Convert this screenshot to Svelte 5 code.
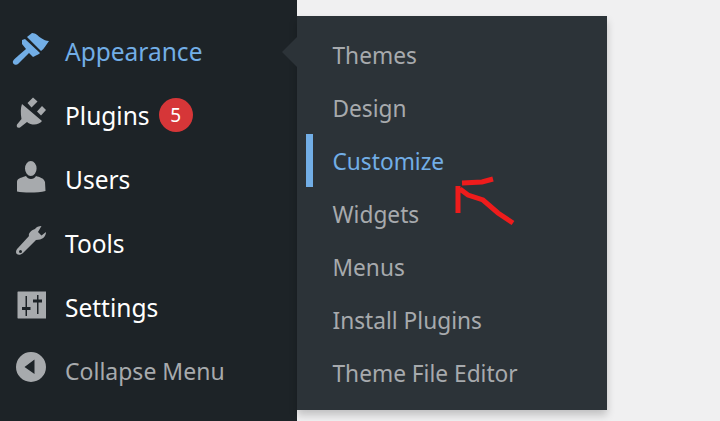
<script>
	const menu = [
		{
			label: 'Appearance',
			active: true,
			box: '0 3 48 40',
			d: 'M19 9L24 5C28 5 30 8 33 10C36 12 38 13 41 13C38 17 36 21 33 23ZM14 12L17 11L32 25L31 26L25 29L21 25L15 31L10 36C8 38 4 36 5 33C6 31 9 29 11 27L18 21L14 16Z'
		},
		{
			label: 'Plugins',
			badge: 5,
			box: '0 3 48 40',
			d: 'M14 12L34 29C31 33 24 34 19 30L12 35.5C10 36.5 8 35 9 32.5L13.5 27C12.5 21 12.5 16 14 12ZM19.5 11L25 5.5L29.5 9.5L23.5 15.5ZM29 19.5L34 14L38 18L33 23.5Z'
		},
		{
			label: 'Users',
			box: '0 3 48 40',
			d: 'M17 12.5a5.8 7.5 0 1 0 11.6 0a5.8 7.5 0 1 0 -11.6 0ZM9 26C9 23 12 22 15 21L18 20C20 24 26 24 28 20C31 21 36 22 37 26L37.5 35C30 37 16 37 9 35.5Z'
		},
		{
			label: 'Tools',
			box: '0 1 48 40',
			d: 'M27 7C28 5 31 4 33.5 4L30 10L33.5 13.5L38 10C38 15 34 18 28 18L15 31C12 34 8 33 8 30C8 28 9 27 10 26L21 14C20 11 24 8 27 7ZM11 29.5a1.5 1.5 0 1 0 3 0a1.5 1.5 0 1 0 -3 0Z'
		},
		{
			label: 'Settings',
			box: '0 1 48 40',
			d: 'M10 5.5H38V32.5H10A1 1 0 0 1 9.5 32V6A1 1 0 0 1 10 5.5ZM17.5 10V21H14V24H17.5V30H19V24H22.5V21H19V10ZM29 9V13.5H25V16.5H29V28H30.5V16.5H34V13.5H30.5V9Z'
		},
		{
			label: 'Collapse Menu',
			muted: true,
			box: '0 3 48 40',
			d: 'M8 19a15 15 0 1 0 30 0a15 15 0 1 0 -30 0ZM16.5 19L26.5 11.5V26Z'
		}
	];

	const submenu = ['Themes', 'Design', 'Customize', 'Widgets', 'Menus', 'Install Plugins', 'Theme File Editor'];
	const current = 'Customize';
</script>

<div class="page">
	<nav class="sidebar">
		{#each menu as item}
			<div class="item" class:active={item.active} class:muted={item.muted}>
				<svg class="icon" viewBox={item.box} width="48" height="40" aria-hidden="true">
					<path d={item.d} fill-rule="evenodd" />
				</svg>
				<span>{item.label}</span>
				{#if item.badge}
					<span class="badge">{item.badge}</span>
				{/if}
			</div>
		{/each}
	</nav>

	<ul class="flyout">
		{#each submenu as name}
			<li class:current={name === current}>{name}</li>
		{/each}
	</ul>

	<!-- hand drawn annotation on top of the screenshot -->
	<svg class="scribble" viewBox="0 0 720 421" aria-hidden="true">
		<path d="M458 213V186M462 183L482 182L493 179M460 189L468 195L483 200L498 213L513 223" />
	</svg>
</div>

<style>
	:global(body) {
		margin: 0;
	}

	.page {
		position: relative;
		display: flex;
		align-items: flex-start;
		height: 421px;
		overflow: hidden;
		background: #f0f0f1;
		font-family: 'Noto Sans', 'Open Sans', sans-serif;
	}

	.sidebar {
		flex: none;
		box-sizing: border-box;
		width: 297px;
		height: 421px;
		padding-top: 19px;
		background: #1d2327;
		color: #fff;
		font-size: 24.5px;
	}

	.item {
		display: flex;
		align-items: center;
		height: 64px;
		padding-left: 8px;
	}

	.item.active {
		color: #72aee6;
	}

	.item.muted {
		color: #a7aaad;
		font-size: 23px;
	}

	.icon {
		flex: none;
		margin-right: 9px;
		fill: #a7aaad;
	}

	.item.active .icon {
		fill: #72aee6;
	}

	.badge {
		display: flex;
		align-items: center;
		justify-content: center;
		width: 34px;
		height: 34px;
		margin-left: 9px;
		border-radius: 50%;
		background: #d63638;
		color: #fff;
		font-size: 19px;
	}

	.flyout {
		position: relative;
		flex: none;
		box-sizing: border-box;
		width: 310px;
		height: 394px;
		margin: 16px 0 0;
		padding: 12px 0 0;
		list-style: none;
		background: #2c3338;
		box-shadow: 0 5px 8px rgba(0, 0, 0, 0.2);
		color: #a7aaad;
		font-size: 22.7px;
	}

	/* pointer towards the active menu item */
	.flyout::before {
		content: '';
		position: absolute;
		top: 21px;
		left: -15px;
		border: 15px solid transparent;
		border-left-width: 0;
		border-right-color: #2c3338;
	}

	.flyout li {
		display: flex;
		align-items: center;
		box-sizing: border-box;
		height: 53px;
		padding: 2px 0 0 35.5px;
	}

	.flyout li.current {
		color: #72aee6;
		background: linear-gradient(#72aee6, #72aee6) 9px 0 / 7px 100% no-repeat;
	}

	.scribble {
		position: absolute;
		inset: 0;
		width: 720px;
		height: 421px;
		fill: none;
		stroke: #ee1c1c;
		stroke-width: 5;
	}
</style>
